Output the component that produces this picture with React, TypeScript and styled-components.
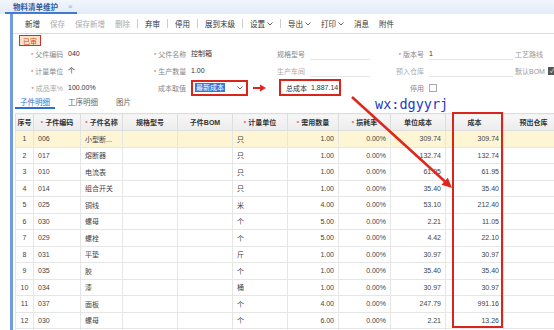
import React from "react";
import styled, { createGlobalStyle } from "styled-components";

const GlobalStyle = createGlobalStyle`
  html, body { margin: 0; padding: 0; background: #fff; }
  body { font-family: "Liberation Sans", "Noto Sans CJK SC", sans-serif; }
`;

const Page = styled.div`
  position: relative;
  width: 554px;
  height: 330px;
  overflow: hidden;
  background: #fff;
  color: #333;
`;

const TabBar = styled.div`
  height: 14px;
  background: linear-gradient(#f2f6fc, #e3ebf7);
  display: flex;
  align-items: flex-end;
  padding-left: 5px;
`;

const PageTab = styled.div`
  height: 13px;
  width: 72px;
  box-sizing: border-box;
  border-bottom: 2px solid #3f7bd4;
  display: flex;
  align-items: center;
  padding-left: 8px;
  gap: 10px;
  font-size: 7.5px;
  font-weight: bold;
  color: #2a5aa6;
  span { font-weight: normal; color: #aab; font-size: 8px; }
`;

const Frame = styled.div`
  margin-left: 10px;
  border-left: 3px solid #6f9de0;
  height: 316px;
`;

const Toolbar = styled.div`
  height: 19px;
  display: flex;
  align-items: center;
  padding-left: 7px;
  border-bottom: 1px solid #dcdcdc;
  font-size: 7.5px;
`;

const ToolItem = styled.div<{ $disabled?: boolean }>`
  padding: 0 5px;
  display: flex;
  align-items: center;
  gap: 2px;
  white-space: nowrap;
  color: ${(p) => (p.$disabled ? "#aaa" : "#333")};
`;

const Sep = styled.div`
  width: 1px;
  height: 9px;
  margin: 0 2px;
  background: #ccc;
`;

const Badge = styled.div`
  margin: 1px 0 0 6px;
  width: 22px;
  height: 11px;
  box-sizing: border-box;
  border: 1px solid #d3301f;
  background: #fbe2c6;
  color: #e0421d;
  font-size: 7px;
  display: flex;
  align-items: center;
  justify-content: center;
`;

const Form = styled.div`
  display: grid;
  grid-template-columns: 123px 119px 119px 123px 60px;
  grid-auto-rows: 16.7px;
  padding-left: 18px;
  font-size: 7px;
`;

const Field = styled.div`
  display: flex;
  align-items: center;
  gap: 5px;
  white-space: nowrap;
`;

const Label = styled.div<{ $faint?: boolean }>`
  width: 32px;
  text-align: right;
  color: ${(p) => (p.$faint ? "#aaa" : "#888")};
`;

const Star = styled.span`
  color: #e34b3b;
  margin-right: 2px;
  font-size: 6px;
`;

const Value = styled.div<{ $w: number; $line?: boolean }>`
  width: ${(p) => p.$w}px;
  height: 11px;
  line-height: 11px;
  color: #333;
  border-bottom: 1px solid ${(p) => (p.$line ? "#e6e6e6" : "transparent")};
`;

const LinkText = styled.div`
  color: #999;
  display: flex;
  align-items: center;
  gap: 3px;
  white-space: nowrap;
`;

const Select = styled.div`
  width: 57px;
  height: 16px;
  box-sizing: border-box;
  border: 2px solid #d9261c;
  display: flex;
  align-items: center;
  justify-content: space-between;
  padding: 0 3px 0 2px;
  color: #777;
`;

const Picked = styled.span`
  background: #3b73d8;
  color: #fff;
  padding: 0 1px;
  line-height: 9px;
`;

const CostBox = styled.div`
  margin-left: 6px;
  width: 62px;
  height: 17px;
  box-sizing: border-box;
  border: 2px solid #d9261c;
  display: flex;
  align-items: center;
  gap: 4px;
  padding-left: 5px;
  font-size: 7px;
  color: #333;
`;

const Check = styled.div<{ $on?: boolean }>`
  width: 6px;
  height: 6px;
  border: 1px solid ${(p) => (p.$on ? "#555" : "#aaa")};
  background: ${(p) => (p.$on ? "#555" : "#fff")};
  color: #fff;
  font-size: 6px;
  line-height: 6px;
  text-align: center;
`;

const Tabs = styled.div`
  display: flex;
  height: 13px;
  padding-left: 2px;
  font-size: 7.5px;
`;

const Tab = styled.div<{ $active?: boolean }>`
  padding: 0 5px;
  margin-right: 8px;
  display: flex;
  align-items: center;
  box-sizing: border-box;
  border-bottom: 2px solid ${(p) => (p.$active ? "#2d6fd0" : "transparent")};
  color: ${(p) => (p.$active ? "#2d6fd0" : "#666")};
`;

const Grid = styled.table`
  margin: 4px 0 0 2px;
  border-collapse: collapse;
  table-layout: fixed;
  width: 548px;
  font-size: 7px;
`;

const Th = styled.th`
  height: 16px;
  padding: 0;
  background: linear-gradient(#f7f7f7, #ececec);
  border: 1px solid #dedede;
  font-weight: bold;
  color: #333;
  white-space: nowrap;
`;

const Row = styled.tr<{ $hl?: boolean }>`
  height: 16.5px;
  background: ${(p) => (p.$hl ? "#fdf5d4" : "#fff")};
`;

const Td = styled.td<{ $align?: string }>`
  padding: 0 4px;
  border: 1px solid #e6e6e6;
  text-align: ${(p) => p.$align || "left"};
  color: #444;
  white-space: nowrap;
  overflow: hidden;
`;

const Watermark = styled.div`
  position: absolute;
  left: 375px;
  top: 96px;
  font-family: "DejaVu Sans Mono", monospace;
  font-size: 13.5px;
  color: #2438c8;
  line-height: 16px;
`;

const ColumnMark = styled.div`
  position: absolute;
  left: 452px;
  top: 112px;
  width: 51px;
  height: 216px;
  box-sizing: border-box;
  border: 2px solid #d9261c;
`;

const Overlay = styled.svg`
  position: absolute;
  left: 0;
  top: 0;
  pointer-events: none;
`;

const Chevron = () => (
  <svg width="6" height="4" viewBox="0 0 6 4">
    <path d="M0.5 0.5 L3 3 L5.5 0.5" fill="none" stroke="#666" strokeWidth="1" />
  </svg>
);

const widths = [18, 47, 42, 55, 55, 55, 51, 52, 55, 58, 60];
const heads: [string, boolean][] = [
  ["序号", false],
  ["子件编码", true],
  ["子件名称", true],
  ["规格型号", false],
  ["子件BOM", false],
  ["计量单位", true],
  ["需用数量", true],
  ["损耗率", true],
  ["单位成本", false],
  ["成本", false],
  ["预出仓库", false],
];

const rows = [
  ["006", "小型断...", "只", "1.00", "309.74", "309.74"],
  ["017", "熔断器", "只", "1.00", "132.74", "132.74"],
  ["010", "电流表", "只", "1.00", "61.95", "61.95"],
  ["014", "组合开关", "只", "1.00", "35.40", "35.40"],
  ["025", "铜线", "米", "4.00", "53.10", "212.40"],
  ["030", "螺母", "个", "5.00", "2.21", "11.05"],
  ["029", "螺栓", "个", "5.00", "4.42", "22.10"],
  ["031", "平垫", "斤", "1.00", "30.97", "30.97"],
  ["035", "胶", "个", "1.00", "35.40", "35.40"],
  ["034", "漆", "桶", "1.00", "30.97", "30.97"],
  ["037", "面板", "个", "4.00", "247.79", "991.16"],
  ["030", "螺母", "个", "6.00", "2.21", "13.26"],
];

const App = () => (
  <Page>
    <GlobalStyle />
    <TabBar>
      <PageTab>
        物料清单维护<span>×</span>
      </PageTab>
    </TabBar>
    <Frame>
      <Toolbar>
        <ToolItem>新增</ToolItem>
        <ToolItem $disabled>保存</ToolItem>
        <ToolItem $disabled>保存新增</ToolItem>
        <ToolItem $disabled>删除</ToolItem>
        <Sep />
        <ToolItem>弃审</ToolItem>
        <Sep />
        <ToolItem>停用</ToolItem>
        <Sep />
        <ToolItem>展到末级</ToolItem>
        <Sep />
        <ToolItem>设置<Chevron /></ToolItem>
        <Sep />
        <ToolItem>导出<Chevron /></ToolItem>
        <ToolItem>打印<Chevron /></ToolItem>
        <ToolItem>消息</ToolItem>
        <ToolItem>附件</ToolItem>
      </Toolbar>
      <Badge>已审</Badge>
      <Form>
        <Field>
          <Label><Star>*</Star>父件编码</Label>
          <Value $w={70}>040</Value>
        </Field>
        <Field>
          <Label><Star>*</Star>父件名称</Label>
          <Value $w={70}>控制箱</Value>
        </Field>
        <Field>
          <Label>规格型号</Label>
          <Value $w={60} $line />
        </Field>
        <Field>
          <Label><Star>*</Star>版本号</Label>
          <Value $w={84} $line>1</Value>
        </Field>
        <LinkText>工艺路线</LinkText>

        <Field>
          <Label><Star>*</Star>计量单位</Label>
          <Value $w={70}>个</Value>
        </Field>
        <Field>
          <Label><Star>*</Star>生产数量</Label>
          <Value $w={70}>1.00</Value>
        </Field>
        <Field>
          <Label $faint>生产车间</Label>
          <Value $w={60} $line />
        </Field>
        <Field>
          <Label $faint>预入仓库</Label>
          <Value $w={84} $line />
        </Field>
        <LinkText>
          默认BOM<Check $on>✓</Check>
        </LinkText>

        <Field>
          <Label $faint><Star>*</Star>成品率%</Label>
          <Value $w={70}>100.00%</Value>
        </Field>
        <Field>
          <Label>成本取值</Label>
          <Select>
            <Picked>最新成本</Picked>
            <Chevron />
          </Select>
          <svg width="13" height="8" viewBox="0 0 13 8">
            <path d="M0 4 H8" stroke="#e0261c" strokeWidth="2" />
            <path d="M7 0.5 L13 4 L7 7.5 Z" fill="#e0261c" />
          </svg>
        </Field>
        <Field>
          <CostBox>
            总成本<span>1,887.14</span>
          </CostBox>
        </Field>
        <Field>
          <Label>停用</Label>
          <Check />
        </Field>
        <div />
      </Form>
      <Tabs>
        <Tab $active>子件明细</Tab>
        <Tab>工序明细</Tab>
        <Tab>图片</Tab>
      </Tabs>
      <Grid>
        <colgroup>
          {widths.map((w, i) => (
            <col key={i} style={{ width: w }} />
          ))}
        </colgroup>
        <thead>
          <tr>
            {heads.map(([h, req]) => (
              <Th key={h}>
                {req && <Star>*</Star>}
                {h}
              </Th>
            ))}
          </tr>
        </thead>
        <tbody>
          {rows.map((r, i) => (
            <Row key={i} $hl={i === 0}>
              <Td $align="center">{i + 1}</Td>
              <Td>{r[0]}</Td>
              <Td>{r[1]}</Td>
              <Td />
              <Td />
              <Td>{r[2]}</Td>
              <Td $align="right">{r[3]}</Td>
              <Td $align="right">0.00%</Td>
              <Td $align="right">{r[4]}</Td>
              <Td $align="right">{r[5]}</Td>
              <Td />
            </Row>
          ))}
          <Row>
            {widths.map((_, i) => (
              <Td key={i} />
            ))}
          </Row>
        </tbody>
      </Grid>
    </Frame>
    <Watermark>wx:dgyyrj</Watermark>
    <ColumnMark />
    <Overlay width="554" height="330">
      <line x1="352" y1="97" x2="445" y2="181.5" stroke="#e0261c" strokeWidth="2.5" />
      <polygon points="452,188 441.5,184.8 447.8,177.8" fill="#e0261c" />
    </Overlay>
  </Page>
);

export default App;
